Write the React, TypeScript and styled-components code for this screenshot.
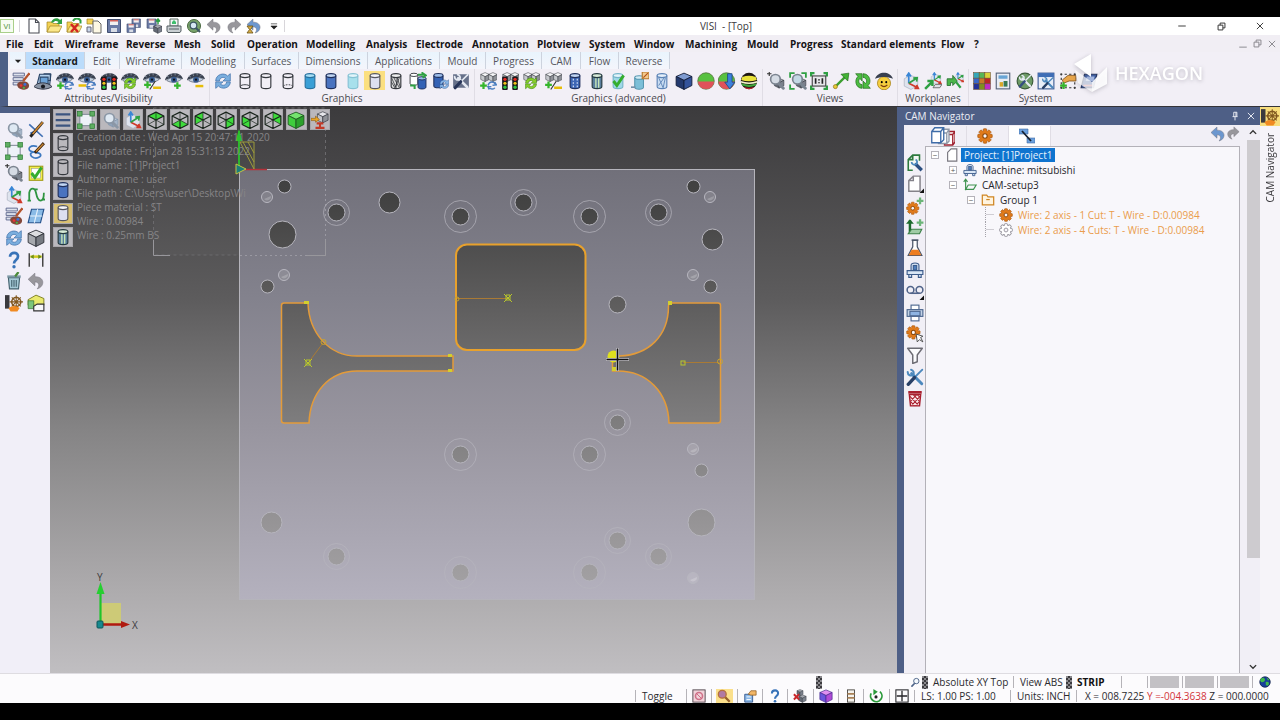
import React, { ReactNode } from "react";
import styled, { createGlobalStyle } from "styled-components";

const GlobalStyle = createGlobalStyle`
  * { box-sizing: border-box; }
  body { margin: 0; background: #000; }
  body, button { font-family: "Open Sans", "Noto Sans", sans-serif; font-size: 10px; line-height: 14px; color: #3a393d; }
  button { border: 0; padding: 0; margin: 0; background: none; display: flex; align-items: center; justify-content: center; white-space: nowrap; }
  svg { display: block; flex: none; }
`;

/* ---------- icon artwork, drawn on a 16 x 16 grid ---------- */

const G = "#2fa043";
const D = "#33363c";

const Cyl = ({ a = "none", b = a, c = D }: { a?: string; b?: string; c?: string }) => (
  <g stroke={c} strokeWidth="1">
    <path d="M3.700 3.200v9.600c0 2.600 8.600 2.600 8.600 0V3.200" fill={b} />
    <ellipse cx="8" cy="3.200" rx="4.300" ry="1.800" fill={a} />
  </g>
);
const Eye = () => (
  <g>
    <path d="M0 7.500C1 0 14 -1.500 16 6.500C12 4.500 4 4.500 0 7.500z" fill="#39404f" />
    <path d="M1.500 3.500l2 1M5 1.500l1 2M9 1l0 2M13 2.500l-1.500 1.500" stroke="#8f99a8" strokeWidth=".7" />
    <path d="M1.500 7.500C5 4 11 4 14.500 6.500C11 9.500 5 10 1.500 7.500z" fill="#c3cfdd" stroke="#4d5668" strokeWidth=".6" />
    <circle cx="8" cy="6.800" r="2.600" fill="#35588c" />
    <circle cx="8" cy="6.800" r="1" fill="#10151f" />
  </g>
);
const Plus = ({ x, y, c = "#35b52c" }: { x: number; y: number; c?: string }) => (
  <path d={`M${x - 3} ${y}h6M${x} ${y - 3}v6`} stroke={c} strokeWidth="2" fill="none" />
);
const Minus = ({ x, y }: { x: number; y: number }) => (
  <path d={`M${x - 3.5} ${y}h7`} stroke="#e6bd08" strokeWidth="2.200" />
);
const Lights = () => (
  <g>
    <rect x="1" y="4" width="5" height="12" rx="1" fill="#17181c" />
    <rect x="10" y="4" width="5" height="12" rx="1" fill="#17181c" />
    <g fill="#e32b24"><circle cx="3.500" cy="6.500" r="1.500" /><circle cx="12.500" cy="6.500" r="1.500" /></g>
    <g fill="#f0c51c"><circle cx="3.500" cy="10" r="1.400" /><circle cx="12.500" cy="10" r="1.400" /></g>
    <g fill="#2fc43b"><circle cx="3.500" cy="13.500" r="1.500" /><circle cx="12.500" cy="13.500" r="1.500" /></g>
  </g>
);
const Cycle = ({ c = "#3f7fc9", e = "#27508a" }: { c?: string; e?: string }) => (
  <g fill={c} stroke={e} strokeWidth=".6">
    <path d="M1.500 8C1.500 2 9 0 12 3.500L14.500 1.500V8H8L10.200 5.700C8.500 4 5 4.800 4.800 8z" />
    <path d="M14.500 8.800C14.500 14.500 7 16 4 12.500L1.500 14.500V8.800H8L5.800 10.700C7.500 12.500 11 12 11.200 8.800z" />
  </g>
);
const Small = ({ x = 0, y = 0, s = 0.6, children }: { x?: number; y?: number; s?: number; children: ReactNode }) => (
  <g transform={`translate(${x} ${y}) scale(${s})`}>{children}</g>
);
const Hook = () => <path d="M8 12c1-4 5.500-4 6.500-1m-.5 3c-1 2-4.500 1-4.500 0m4.500-5l1.500 2.500-3.500 .3M9 15.500l-1-2.500 3 0" stroke="#4b7dbf" strokeWidth="1.300" fill="none" />;
const Cube = ({ t = "#a4a8b0", l = "#646a75", r = "#7b818c", s = "#2c3038" }: { t?: string; l?: string; r?: string; s?: string }) => (
  <g stroke={s} strokeWidth=".8" strokeLinejoin="round">
    <path d="M8 1l7 3-7 3.500L1 4z" fill={t} />
    <path d="M1 4l7 3.500V15.500L1 12z" fill={l} />
    <path d="M15 4L8 7.500V15.500L15 12z" fill={r} />
  </g>
);
const faces: Record<string, string> = {
  top: "M8 1l7 3.500L8 8 1 4.500z",
  bottom: "M1 12l7-4 7 4-7 3.500z",
  back: "M1 4.500L8 1v7L1 12z",
  right: "M15 4.500L8 8v7.500L15 12z",
  left: "M1 4.500L8 8v7.500L1 12z",
  far: "M15 4.500L8 1v7L15 12z",
};
const FaceCube = ({ f }: { f: string }) => (
  <g strokeLinejoin="round">
    <path d={faces[f]} fill="#3edb3c" />
    <path d="M8 1l7 3.500V12l-7 3.500L1 12V4.500zM1 4.500L8 8l7-3.500M8 8v7.500" fill="none" stroke="#17221a" strokeWidth="1" />
    <path d="M8 1v7M1 12l7-4 7 4" fill="none" stroke="#17221a" strokeWidth=".6" />
  </g>
);
const Lens = ({ c = "#bcd7ee", h = "#6e7683" }: { c?: string; h?: string }) => (
  <g>
    <path d="M10 10l4.500 4.500" stroke={h} strokeWidth="2.600" strokeLinecap="round" />
    <circle cx="7.500" cy="6.500" r="4.300" fill={c} stroke={h} strokeWidth="1.500" />
  </g>
);
const Gear = ({ c = "#e07a1a", hollow = false }: { c?: string; hollow?: boolean }) => (
  <g>
    {[0, 45, 90, 135].map((a) => (
      <rect key={a} x="6.300" y=".8" width="3.400" height="14.400" rx=".6" fill={hollow ? "#fff" : c} stroke={hollow ? c : "#a85509"} strokeWidth={hollow ? "1.100" : ".7"} transform={`rotate(${a} 8 8)`} />
    ))}
    <circle cx="8" cy="8" r="5.200" fill={hollow ? "#fff" : c} />
    <circle cx="8" cy="8" r="2.200" fill="#f8f6fa" stroke={hollow ? c : "#8d4a0c"} strokeWidth="1.100" />
  </g>
);
const Frame = ({ c = "#5fae62" }: { c?: string }) => (
  <g>
    <rect x="2.500" y="3" width="11" height="10" fill="#eef2f8" stroke="#8a919e" />
    {[[0.5, 0.5], [11.5, 0.5], [0.5, 11.5], [11.5, 11.5]].map(([x, y]) => (
      <rect key={`${x}${y}`} x={x} y={y} width="4" height="4" fill={c} stroke="#24772d" strokeWidth=".6" />
    ))}
  </g>
);
const Axes = () => (
  <g fill="none" strokeWidth="1.500">
    <path d="M2 6l5-3 7 2v7l-6 3.500-6-3z" fill="#dfe4ee" stroke="#a8afbd" strokeWidth=".6" />
    <path d="M6 10V2M4 4l2-3 2 3" stroke="#3a86d6" />
    <path d="M6 10l8 4M11 14.500l3.500 0-1.500-3" stroke="#cf3a2a" />
    <path d="M6 10l7-4.500M10 5.500l3.500-.5-.5 3.500" stroke={G} />
  </g>
);
const Page = ({ f = "#fff" }: { f?: string }) => (
  <path d="M3 1h6.500L13 4.500V15H3zM9.500 1v3.500H13" fill={f} stroke="#4a4d55" strokeWidth="1.100" />
);
const Folder = () => (
  <g stroke="#a08420" strokeWidth=".7">
    <path d="M1 4h5l1 1.500h6V14H1z" fill="#f3d254" />
    <path d="M4 8h12l-3 6H1z" fill="#fbe78a" />
  </g>
);
const Floppy = () => (
  <g>
    <path d="M1.500 1.500h13v13h-13z" fill="#6b7ba6" stroke="#414e70" />
    <path d="M4 2h8v5H4z" fill="#f2f0f0" /><path d="M4 2h8v1.500H4z" fill="#d2605a" />
    <path d="M5 10h6v4H5z" fill="#d8dce5" />
  </g>
);
const Undo = ({ c = "#98979c" }: { c?: string }) => (
  <path d="M7 1v3.200C12 4 14.500 7 14 10c-.4 2.500-2.300 4.300-5 5 2-2 2.500-6-2-6.200v3.400L1 6.500z" fill={c} stroke="#77767e" strokeWidth=".5" />
);
const Check = () => <path d="M4 8l3 4 6-9" stroke="#35ad2e" strokeWidth="2.600" fill="none" />;
const Brush = () => (
  <g>
    <path d="M1 1h10v2.500H1zM1 5h9v2.500H1zM1 9h7v2.500H1z" fill="#dfe3ee" stroke="#59638a" strokeWidth=".8" />
    <path d="M15.500 1L10 8" stroke="#b4532c" strokeWidth="2" />
    <path d="M5 10c2-2.500 9-2.500 10 1s-2 5.500-6 4.500-5-3.500-4-5.500z" fill="#84483a" />
    <circle cx="8" cy="12" r="1.200" fill="#e33" /><circle cx="11.500" cy="11" r="1.300" fill="#3b70d8" /><circle cx="10.500" cy="14" r="1" fill="#48b548" />
  </g>
);
const Tools = ({ a = "#4c88bd", b = "#283f66" }: { a?: string; b?: string }) => (
  <g fill="none" strokeLinecap="round">
    <path d="M5 5l9 9" stroke={a} strokeWidth="2.600" /><path d="M1.500 3.500c0 3 3 4 5 2.500 1-2 0-4-2-4.500" stroke={a} strokeWidth="1.800" />
    <path d="M14.500 1.500L8 8" stroke={a} strokeWidth="1.600" /><path d="M7.500 8.500L2 14.500" stroke={b} strokeWidth="3" />
  </g>
);
const Machine = () => (
  <g fill="#d9e6f5" stroke="#3d5c8c" strokeWidth="1">
    <path d="M4.500 8V4c0-3 7-3 7 0v4" /><path d="M1 8.500h14V12H1z" /><path d="M2.500 12h2.500v2.500H2.500zM11 12h2.500v2.500H11z" />
    <rect x="6.500" y="4" width="3" height="4" fill="#4d7fbe" />
  </g>
);
const Cubes3 = () => (
  <g>
    <Small x={1} y={0} s={0.55}><Cube t="#f6f6f8" l="#c5c8cc" r="#8e9197" /></Small>
    <Small x={8} y={0} s={0.55}><Cube t="#f6f6f8" l="#c5c8cc" r="#8e9197" /></Small>
  </g>
);
const Wheel = () => (
  <g>
    <rect x="0" y="1" width="4" height="12" fill="#3a3a3e" />
    <g stroke="#80571f" fill="none"><circle cx="10" cy="7" r="4" strokeWidth="1.400" /><path d="M10 1v12M4 7h12M6 3l8 8M14 3l-8 8" strokeWidth=".9" /></g>
    <path d="M3 12.500c4-2.500 7-2.500 10 0l-2 3H5z" fill="#f08a22" />
  </g>
);

const art: Record<string, ReactNode> = {
  brush: <Brush />,
  layers: <g><path d="M3 10l2-8h10l-1 9z" fill="#b6d2ee" stroke="#2c4668" /><path d="M5.500 4.500h7v6h-7z" fill="#6da3d8" stroke="#2c4668" /><path d="M8.500 1.500h6v6h-2" fill="none" stroke="#2c4668" /><path d="M0 13c3-4.500 12-4.500 16 0-4 3-12 3-16 0z" fill="#8b95a5" stroke="#2b3040" strokeWidth=".8" /><circle cx="8" cy="12.800" r="1.800" fill="#16181f" /></g>,
  eyeSwap: <g><Eye /><Plus x={4} y={12} /><Hook /></g>,
  eyeBack: <g><Eye /><Minus x={4} y={12} /><Hook /></g>,
  eyeLights: <g><Eye /><Lights /></g>,
  eyeCycle: <g><Eye /><Small x={2} y={4} s={0.75}><Cycle c="#86cf2c" e="#3e7d12" /></Small></g>,
  eyeToggle: <g><Eye /><Plus x={4} y={11.500} /><path d="M6 15.500L11 8" stroke="#333" /><Minus x={12.500} y={14} /></g>,
  eyePlus: <g><Eye /><Plus x={11} y={12} /></g>,
  eyeMinus: <g><Eye /><Minus x={11} y={12.500} /></g>,
  refresh: <Cycle c="#7aaede" e="#3a6aa6" />,
  cylWire: <g><Cyl /><path d="M4 12.800c0-2 8-2 8 0" stroke={D} fill="none" strokeWidth=".8" /></g>,
  cylPlain: <Cyl />,
  cylDash: <g><Cyl /><path d="M4 12.800c0-2 8-2 8 0" stroke={D} fill="none" strokeWidth=".8" strokeDasharray="1.500 1" /></g>,
  cylSky: <Cyl a="#a9dff5" b="#3a9fd6" c="#28719f" />,
  cylBlue: <Cyl a="#c2d6f3" b="#4a73c0" c="#1f2f5c" />,
  cylPale: <Cyl a="#e2f4fa" b="#a8e0ec" c="#86c2d4" />,
  cylWhite: <Cyl a="#f5f5fa" b="#dddff0" c="#55555e" />,
  cylMesh: <g><Cyl a="#eee" b="#ddd" /><path d="M4 5l4 9 1-9 3 9M6 5l5 9M4 9l3 5M7 14l4-9" stroke={D} strokeWidth=".7" fill="none" /></g>,
  cylCopy: <g><Small x={-2} y={0} s={0.8}><Cyl a="#fff" /></Small><Small x={5} y={3} s={0.82}><Cyl a="#9dbdea" b="#3462b5" c="#1f2f5c" /></Small><path d="M8 2.500h4V1l3 2-3 2M1 12h4l0 3" stroke={G} strokeWidth="1.800" fill="none" /></g>,
  cylRefresh: <g><Small x={-1}  s={0.95}><Cyl a="#9dbdea" b="#3462b5" c="#1f2f5c" /></Small><Small x={7} y={6}><Cycle c="#8bb9ea" /></Small></g>,
  cylTools: <g><rect x="1" y="2" width="14" height="12" fill="#67718a" /><Small x={1} y={1} s={0.9}><Tools a="#e5e9f2" b="#273458" /></Small></g>,
  cubeSwap: <g><Cubes3 /><Plus x={4} y={12} /><Hook /></g>,
  cubeLights: <g><Cubes3 /><Lights /></g>,
  cubeCycle: <g><Cubes3 /><Small x={2} y={4} s={0.75}><Cycle c="#86cf2c" e="#3e7d12" /></Small></g>,
  cubeToggle: <g><Cubes3 /><Plus x={4} y={11.500} /><path d="M6 15.500L11 8" stroke="#333" /><Minus x={12.500} y={14} /></g>,
  cylDots: <g><Cyl a="#c2d6f3" b="#3d66b5" c="#1f2f5c" /><path d="M6.500 6v8M10 6v8" stroke="#dfe9fa" strokeDasharray="1.500 1.500" /></g>,
  cylStripe: <g><Cyl a="#d8ebd8" b="#5a7f9d" c="#24393f" /><path d="M7 5.500v8.500M9.500 5.500v8.500" stroke="#c8e8b8" strokeWidth="1.200" /></g>,
  cylCheck: <g><Cyl a="#e2f4fa" b="#9fd8e8" c="#74b4c8" /><Check /></g>,
  cylNote: <g><Small y={2} s={0.9}><Cyl a="#d3ecf5" b="#7cbfd8" c="#5293ad" /></Small><path d="M0 13.500h4" stroke="#7390a8" strokeWidth="1.500" /><path d="M10 0h6v6h-6z" fill="#f2c98c" stroke="#b5762a" /><path d="M11 5l4-4" stroke="#b34b12" /></g>,
  cylNet: <g><Cyl a="#e4eefa" b="#c9dcf2" c="#5b82b5" /><path d="M5 5l4 9 2-9M5 12l5-7" stroke="#5b82b5" strokeWidth=".8" fill="none" /></g>,
  cubeNavy: <Cube t="#7f9bd0" l="#23396e" r="#34539b" s="#131d3a" />,
  ballSplit: <g><circle cx="8" cy="8" r="7.300" fill="#58c140" stroke="#54703c" strokeWidth=".7" /><path d="M.8 8.500a7.200 6.700 0 0 0 14.400 0z" fill="#e0525a" /></g>,
  ballDown: <g><circle cx="7.500" cy="8" r="7.300" fill="#58c140" stroke="#54703c" strokeWidth=".7" /><path d="M.4 8.500a7.100 6.700 0 0 0 14.200 0z" fill="#e0525a" /><path d="M8.500 1.500h4V9H15l-4.500 6L6 9h2.500z" fill="#3d82dc" stroke="#1c457e" strokeWidth=".7" /></g>,
  ballBands: <g><circle cx="8" cy="8" r="7.300" fill="#1e1712" /><path d="M2 4.500q6-2.500 12 0l.9 2.500q-7 2.500-13.800 0z" fill="#e9e23a" /><path d="M.9 8q7 2.500 14.200 0v1.500q-7 2.500-14.100 0z" fill="#f4f2cc" /><path d="M1.200 10q7 2.500 13.600 0l-.8 2q-6 2.500-12 0z" fill="#3fa63c" /><path d="M3 13q5 2 10 0-5 4.500-10 0z" fill="#b8262b" /></g>,
  lensCube: <g><Small x={6} y={5}><Cube /></Small><Lens c="#d5dbe4" h="#7c8490" /><path d="M0 1.500h4M2 0v3.500" stroke="#333" /></g>,
  lensGreen: <g><Small x={6} y={5}><Cube /></Small><Lens c="#c3d8e4" h="#78848f" /><path d="M1 5V1h4M11 1h4v4M1 11v4h4" stroke={G} strokeWidth="1.600" fill="none" /></g>,
  ratio: <g><path d="M1 4V1h3M12 1h3v3M1 12v3h3M12 15h3v-3" stroke={G} strokeWidth="2" fill="none" /><rect x="2" y="3.500" width="12" height="9" fill="#e6e6ea" stroke="#444" /><path d="M5 5.500v5M11 5.500v5M8 6.500v1M8 9v1" stroke="#222" strokeWidth="1.500" /></g>,
  slopeArrow: <g><path d="M3 13L13 3" stroke="#3c9f30" strokeWidth="2" /><path d="M8 2l7-1-1 7z" fill="#43b335" stroke="#236b1a" strokeWidth=".6" /><circle cx="3" cy="13" r="1.800" fill="#e6cb3a" stroke="#8a6f10" strokeWidth=".6" /></g>,
  turnGreen: <g transform="rotate(90 8 8)"><Cycle c="#4cbc42" e="#1f6a19" /></g>,
  hatFace: <g><circle cx="8" cy="10" r="5.800" fill="#f6cf3f" stroke="#a67f12" strokeWidth=".7" /><path d="M0 6C3 -1 13 -1 16 6C11 4 5 4 0 6z" fill="#39404f" /><circle cx="6" cy="9" r=".9" /><circle cx="10" cy="9" r=".9" /><path d="M5 11.500q3 3 6 0" stroke="#7b3d10" fill="none" /></g>,
  axes: <Axes />,
  axesArrow: <g><Small x={5} y={0} s={0.7}><Axes /></Small><path d="M1 15l6-6M3 8h4.500v4.500" stroke={G} strokeWidth="2.200" fill="none" /><path d="M8 14l2-3h6l-2 3z" fill="#dedee6" stroke="#555" strokeWidth=".7" /></g>,
  axesTurn: <g><Small x={7} y={0} s={0.6}><Axes /></Small><path d="M1 12V6h5V3l4 5-4 4V9.500H4V12z" fill="#4bb54a" stroke="#1f6a2a" strokeWidth=".7" /><path d="M9 9l4 5" stroke={G} strokeWidth="2" /></g>,
  palette: <g>{["#35a7b8", "#57b557", "#d9d13a", "#3a66c8", "#c77a26", "#bb2424", "#22309a", "#7f8f20", "#c02ac6"].map((c, i) => <rect key={c} x={(i % 3) * 5 + 0.5} y={Math.floor(i / 3) * 5 + 0.5} width="5" height="5" fill={c} stroke="#6d5233" strokeWidth=".5" />)}</g>,
  sheet: <g><rect x="2" y="1" width="12" height="14" fill="#e8ecf4" stroke="#56627a" /><path d="M4 3h8v3H4z" fill="#69a5d5" /><path d="M5 9h3v4H5z" fill="#d9a82a" /><path d="M8.500 8H12v5H8.500z" fill="#3a7a53" /></g>,
  toolDisc: <g><circle cx="8" cy="8" r="7" fill="#6d9a66" stroke="#3b5a3a" /><Small x={2} y={2} s={0.75}><Tools a="#e6ecf5" b="#35507f" /></Small></g>,
  toolWindow: <g><rect x="1" y="1" width="14" height="14" fill="#e9eef8" stroke="#3c5c94" /><path d="M1 1h14v3.500H1z" fill="#3f6db5" /><Small x={4} y={4} s={0.7}><Tools /></Small></g>,
  handGrid: <g><path d="M1 2h14M1 14h14M2 1v14M14 1v14" stroke="#333" strokeDasharray="2 2" /><path d="M3 7l5-4h7v5H9l-5 2z" fill="#e8a64b" stroke="#7a4c14" strokeWidth=".7" /><Plus x={4} y={12} /></g>,
  sheetBlue: <g><path d="M4 2h11l-3 12H1z" fill="#3e5fa5" stroke="#26365f" /><path d="M6 4h7l-1 4H5z" fill="#a7bce6" /><path d="M3 12h8" stroke="#e88" strokeWidth="1.500" /></g>,
  page: <Page />,
  openGreen: <g><Folder /><path d="M5 4.500c2-5 7-5 9-2.500l2-1.500v5.500h-5.500l2-2c-2-1.500-4-1.500-5 .5z" fill={G} /></g>,
  openRed: <g><Folder /><path d="M7 3c2-3.500 6-3 7.500-.5v3" stroke={G} strokeWidth="2" fill="none" /><path d="M5 6l7 8M12 6l-7 8" stroke="#d3261f" strokeWidth="2.400" /></g>,
  copyDocs: <g><path d="M1 1h6v5H1z" fill="#f3d254" stroke="#a08420" strokeWidth=".7" /><path d="M7 3h5l3 3v9H7z" fill="#fdf8e4" stroke="#666" /><path d="M1 9h4v5H1z" fill="#c9d6ea" stroke="#667" /></g>,
  floppy: <Floppy />,
  floppies: <g><Small x={5} y={0} s={0.65}><Floppy /></Small><Small x={0} y={5} s={0.65}><Floppy /></Small></g>,
  floppyOut: <g><Small s={0.7}><Floppy /></Small><Small x={7} y={6}><Cube /></Small><path d="M12 6V1.500M10 3.500l2-2.500L14 3.500" stroke={G} strokeWidth="1.500" fill="none" /></g>,
  printer: <g><path d="M4 1h8v7H4z" fill="#f3f6f4" stroke="#5b6a62" /><path d="M6 6h4V4L8 2 6 4z" fill="#3fbf6d" /><path d="M1 8h14v5l-1 1.500H2L1 13z" fill="#c9cfd2" stroke="#545e62" /><path d="M3 11h10" stroke="#545e62" /></g>,
  preview: <g><circle cx="8" cy="8" r="6.500" fill="#79a46a" stroke="#47663f" /><circle cx="7.500" cy="7.500" r="3.300" fill="#d7e8f4" stroke="#3d5664" strokeWidth="1.200" /><path d="M10 10l4 4" stroke="#3d5664" strokeWidth="2" /></g>,
  undo: <Undo />,
  redo: <g transform="translate(16 0) scale(-1 1)"><Undo /></g>,
  history: <g><Undo c="#6c97cf" /><path d="M1 8h6l-2.500 3.500L7 15H1l2.500-3.500z" fill="#d6ad47" stroke="#6b5012" strokeWidth=".8" /></g>,
  lensSoft: <g><Small x={6} y={5}><Cube t="#b9c6d6" l="#8fa3ba" r="#a5b5c8" s="#7c8fa6" /></Small><Lens c="#dfe9f3" h="#8b97a6" /></g>,
  wand: <g><path d="M2 3l12 11M3 11l5-2" stroke="#3f6fb4" strokeWidth="1.500" /><path d="M14 1L3 14" stroke="#222" strokeWidth="2.600" /><path d="M14 1L5 11.500" stroke="#c98532" strokeWidth="1.500" /></g>,
  frame: <Frame />,
  curvePen: <g><path d="M9 4C3 2 0 6 3 8s8 1 9 3-3 4-6 3-4-4-1-5" stroke="#3c78c0" strokeWidth="1.500" fill="none" /><path d="M15 1L7 9.500" stroke="#3b240c" strokeWidth="2.600" /><path d="M14.500 1.500L8 8.500" stroke="#c98532" strokeWidth="1.200" /></g>,
  noteCheck: <g><rect x="2" y="2" width="12" height="12.500" fill="#f4ef4b" stroke="#a39c1a" /><rect x="4" y="4" width="8" height="8.500" fill="#fff" stroke="#999" strokeWidth=".5" /><Check /></g>,
  curve: <path d="M2 13V6c1-5 5-5 6 0s2 7 4 7 3-3 3-7M.5 13h3M6.500 3h3M13.500 12h2.500" stroke="#2f9440" strokeWidth="1.600" fill="none" />,
  pane: <g><path d="M4 2h11l-3 12H1z" fill="#8abbe6" stroke="#25528c" /><path d="M9.500 2L6.500 14M2.500 8h11" stroke="#e4f1fc" /></g>,
  cubeGrey: <Cube t="#dcdde0" l="#a5a8ad" r="#777b82" />,
  question: <g><path d="M4.500 5c0-4.500 7.500-4.500 7 0 0 3-3.500 3-3.500 6" stroke="#3873b8" strokeWidth="2.400" fill="none" /><circle cx="8" cy="14" r="1.500" fill="#3873b8" /></g>,
  dimension: <g><path d="M2 2v12M14 2v12" stroke="#444" strokeWidth="1.300" /><path d="M3 5h10" stroke="#d1c91c" strokeWidth="2.200" /><path d="M3 5l3-2v4zM13 5l-3-2v4z" fill="#6a8f1a" /></g>,
  trash: <g><path d="M3 5h10l-1 10H4z" fill="#a5c9d6" stroke="#44626e" /><path d="M2 3h12v2H2z" fill="#7e99a6" /><path d="M6 7v6M8 7v6M10 7v6" stroke="#44626e" /><path d="M9 4l3-4" stroke="#4a8a3a" strokeWidth="2" /></g>,
  wheel: <Wheel />,
  noteFlag: <g><path d="M1 5l7-4 7 3v6H1z" fill="#e9e96e" stroke="#77791a" strokeWidth=".8" /><path d="M1 6h5v7H1z" fill="#7cc47c" stroke="#2c6b2c" strokeWidth=".6" /><path d="M6 11l3-2h6v6H6z" fill="#f7f7fa" stroke="#333" /></g>,
  menu: <path d="M1.500 3h13M1.500 8h13M1.500 13h13" stroke="#3c5580" strokeWidth="2" />,
  faceTop: <FaceCube f="top" />, faceBottom: <FaceCube f="bottom" />, faceBack: <FaceCube f="back" />,
  faceRight: <FaceCube f="right" />, faceLeft: <FaceCube f="left" />, faceFar: <FaceCube f="far" />,
  solidGreen: <Cube t="#74e46e" l="#3fce3d" r="#2ba12c" s="#1f5a20" />,
  viewCube: <g><Small x={5} y={0} s={0.68}><Cube t="#e6e6ea" l="#c2c3c8" r="#8e9096" /></Small><path d="M0 6.500h4V4.500L7.500 7.500 4 10V8.500H0z" fill="#e8a326" stroke="#8a5a10" strokeWidth=".5" /><path d="M4 15h8M8 15v-4M5 11h6" stroke="#c23a28" strokeWidth="1.800" /></g>,
  docTool: <g><path d="M6 14.500H2V5l4-4h6v5M2 5h4V1" fill="#f4f8f4" stroke="#2d7a3e" strokeWidth="1.400" /><path d="M8 8.500l6 6" stroke="#2b4f80" strokeWidth="3" /><path d="M5 7c0 2.500 2.500 3 4 2s1-3.500-.5-4" fill="none" stroke="#4c88bd" strokeWidth="1.600" /></g>,
  pageTurn: <g><path d="M2.500 5l4-4h6v13.500h-10zM2.500 5h4V1" fill="#fff" stroke="#84828a" strokeWidth="1.300" /><path d="M16 12v4h-4z" fill="#111" /></g>,
  gearPlus: <g><Small y={4} s={0.75}><Gear /></Small><Plus x={12.500} y={3.500} c="#6cb578" /></g>,
  axisPlus: <g><path d="M3.500 13V2" stroke="#1c6a2c" strokeWidth="2.200" /><path d="M0 5l3.500-4L7 5z" fill="#1c6a2c" /><path d="M2 14h10l2-4H5z" fill="#9fcba5" stroke="#3c8048" /><Plus x={12.500} y={4} c="#6cb578" /></g>,
  flask: <g><path d="M6 1v6L2 14.500h12L10 7V1" fill="#fff" stroke="#4a5568" strokeWidth="1.100" /><path d="M5 9.500h6l2.500 5h-11z" fill="#ee7d20" /><path d="M5 1h6" stroke="#4a5568" strokeWidth="1.500" /></g>,
  machine: <Machine />,
  rolls: <g><g fill="none" stroke="#51648a" strokeWidth="1.400"><circle cx="4" cy="7" r="3" /><circle cx="12" cy="7" r="3" /><path d="M4 10h8" /></g><path d="M16 12v4h-4z" fill="#111" /></g>,
  print: <g stroke="#4d678f"><rect x="4.500" y="1" width="7" height="4" fill="#fff" /><rect x="1" y="5" width="14" height="6" fill="#c3d2e6" /><rect x="3.500" y="6.500" width="9" height="4" fill="#8fb4e2" /><rect x="4.500" y="11" width="7" height="4" fill="#fff" /></g>,
  gearPick: <g><Small s={0.82}><Gear /></Small><path d="M9 8l1 7 2-2 3 2-2-4 2-1z" fill="#fff" stroke="#444" strokeWidth=".8" /></g>,
  filter: <path d="M1.500 2h13L10 8v6l-4 1.500V8z" fill="#fbfbfd" stroke="#6d6c74" strokeWidth="1.300" strokeLinejoin="round" />,
  tools: <Tools />,
  bin: <g stroke="#a9202f" fill="none"><path d="M3 5h10l-1 10H4z" fill="#fbe9eb" strokeWidth="1.300" /><path d="M2 3h12" strokeWidth="2.400" /><path d="M6.500 5l5.500 6M10 5l2 2M3.500 6.500L11 14.500M4 11l3.500 4M9.500 5L4 11M12.500 6.500L5 14.500M12 11l-3.500 4" strokeWidth=".9" /></g>,
  gear: <Gear />,
  gearOff: <Gear c="#9a98a0" hollow />,
  setup: <g fill="none" stroke="#3f9350" strokeWidth="1.300"><path d="M3 14V2M.8 4.500L3 1.500l2.200 3" /><path d="M3 13l3-5h9l-3 5z" /></g>,
  folder: <g fill="#fff4df" stroke="#cf8522" strokeWidth="1.400"><path d="M1.500 2.500h5l1.500 2h6.500v9h-13z" /><path d="M6 7.500h4" /></g>,
  undoBlue: <Undo c="#6c97cf" />,
  link: <g><path d="M0 1h9v5H0zM8 10h8v5H8z" fill="#6ba0dd" stroke="#3f6ca6" strokeWidth=".6" /><path d="M3 3l9 10" stroke="#16202f" strokeWidth="1.800" /></g>,
  boxes: <g fill="#fff" strokeWidth=".9"><path d="M9 7l1.500-2H16v7l-1.500 2H9zM9 7h5.500v7M14.500 7L16 5" stroke="#a0212f" /><path d="M5 6l2-2.500h5v8L10.500 13H5zM5 6h5.500v7M10.500 6L12 3.500" stroke="#8f99a8" /><path d="M.5 5l2-2.500h6v8L6.500 12.500h-6zM.5 5h6v7.500M6.500 5l2-2.500" stroke="#3e6ca8" /></g>,
  globe: <g><circle cx="8" cy="8" r="7" fill="#173f9a" stroke="#0d1e48" /><path d="M3 3c3-2 5 0 5 2S5 9 3 8 1 5 3 3zM9 8c3-1 5 0 4 3s-4 2-4 0zM10 2l4 3-2 1z" fill="#3fbb4a" /></g>,
  lens: <g transform="translate(16 0) scale(-1 1)"><Lens c="#f5f9fd" h="#4c6388" /></g>,
  snap: <g><rect x="1" y="1" width="14" height="14" fill="#f0d3da" stroke="#4a3e46" /><circle cx="8" cy="8" r="4" fill="none" stroke="#cf7188" strokeWidth="1.800" /><path d="M5 5l6 6" stroke="#c95d78" /></g>,
  hammer: <g><path d="M7 7l7.500 7.500" stroke="#97602a" strokeWidth="2.600" /><circle cx="6" cy="6" r="4.500" fill="#b07aa4" stroke="#b5713c" strokeWidth="1.500" /></g>,
  docHand: <g><path d="M2 6h9v9H2z" fill="#8cb9e8" stroke="#30548a" /><path d="M6 6l3-4h6v5H9z" fill="#f1b667" stroke="#8a5418" strokeWidth=".8" /><path d="M4 9h5M4 12h5" stroke="#fff" /></g>,
  cubesRed: <g><Small x={6} y={6}><Cube /></Small><Small x={4} y={0} s={0.5}><Cube /></Small><path d="M1 6l6 6M7 6l-6 6" stroke="#c9262a" strokeWidth="2.200" /></g>,
  cubePurple: <Cube t="#e08ff0" l="#6b55dd" r="#b04bd6" s="#4a2a90" />,
  ladder: <g><rect x="4" y="1" width="8" height="14" fill="#f5f3ee" stroke="#44403c" /><path d="M4 5.500h8M4 10h8" stroke="#a98258" strokeWidth="2" /></g>,
  spin: <g><path d="M12.500 3a6.500 6.500 0 1 1-10 2" fill="none" stroke="#2b9a3a" strokeWidth="2" /><path d="M5 0l5 3-5 4z" fill="#2b9a3a" /><circle cx="8" cy="9" r="1.800" fill="#222" /></g>,
  cross: <g stroke="#26262a" fill="none"><rect x="1" y="1" width="14" height="14" strokeWidth="1.200" /><path d="M8 2v12M2 8h12" strokeWidth="1.500" /></g>,
  minimize: <path d="M2 8h12" stroke="currentColor" strokeWidth="1.500" />,
  restore: <path d="M3 6h7v7H3zM6 6V3h7v7h-3" fill="none" stroke="currentColor" strokeWidth="1.400" />,
  close: <path d="M3 3l10 10M13 3L3 13" stroke="currentColor" strokeWidth="1.500" />,
  underscore: <path d="M2 13h12" stroke="currentColor" strokeWidth="1.500" />,
  down: <path d="M3 6h10l-5 5z" fill="#222" />,
  downBar: <path d="M3 8h10l-5 5zM3 4.500h10" fill="#222" stroke="#222" />,
  chevUp: <path d="M3 11l5-5 5 5" stroke="#333" strokeWidth="2.200" fill="none" />,
  chevDown: <path d="M3 5l5 5 5-5" stroke="#333" strokeWidth="2.200" fill="none" />,
  pin: <path d="M4 9h8M6 9V2h5v7M9.500 2v7M8 9v6" stroke="currentColor" strokeWidth="1.500" fill="none" />,
  project: <path d="M3 5l4-4h6.500v14H3z" fill="#fff" stroke="#77757e" strokeWidth="1.300" />,
};

const Icon = ({ name, size = 18 }: { name: string; size?: number }) => (
  <svg width={size} height={size} viewBox="0 0 16 16" aria-hidden="true">{art[name]}</svg>
);

/* ---------- window frame ---------- */

const Screen = styled.div`
  display: flex;
  flex-direction: column;
  min-height: 100vh;
  padding: 17px 0;
  background: #000;
`;
const TitleBar = styled.header`
  display: flex;
  align-items: center;
  height: 18px;
  background: #fff;
`;
const QuickBar = styled.div`
  display: flex;
  align-items: center;
  width: 290px;
  height: 100%;
`;
const QuickButton = styled.button`
  width: 20px;
  height: 18px;
`;
const Badge = styled.span`
  width: 14px;
  height: 14px;
  margin-right: 5px;
  border: 1px solid #a9cf8a;
  background: #f7fcf2;
  color: #55913a;
  font-size: 8px;
  line-height: 12px;
  text-align: center;
`;
const Rule = styled.span`
  width: 1px;
  height: 12px;
  margin-right: 4px;
  background: #d8d6da;
`;
const Title = styled.h1`
  flex: 1;
  margin: 0;
  font-size: 10px;
  font-weight: 400;
  text-align: center;
  white-space: pre;
`;
const WindowButtons = styled.div`
  display: flex;
  justify-content: space-between;
  width: 118px;
  padding: 0 15px;

  button { color: #333; }
`;
const MenuBar = styled.nav`
  display: flex;
  align-items: center;
  height: 17px;
  padding-left: 6px;
  background: #f1eef4;
`;
const MenuItem = styled.button<{ $w: number }>`
  flex: none;
  justify-content: flex-start;
  width: ${(p) => p.$w}px;
  height: 17px;
  color: #141316;
  font-weight: 700;
`;
const ChildButtons = styled.div`
  display: flex;
  gap: 4px;
  margin-left: auto;
  padding-right: 3px;

  button { color: #88868c; }
`;

/* ---------- ribbon ---------- */

const Ribbon = styled.section`
  position: relative;
  height: 55px;
  border-left: 8px solid #4e5f86;
  border-bottom: 1px solid #353438;
  background: #f2eff6;
`;
const TabRow = styled.div`
  display: flex;
  height: 17px;
  padding-left: 2px;
`;
const Tab = styled.button<{ $w: number; $active?: boolean }>`
  flex: none;
  width: ${(p) => p.$w}px;
  border-right: 1px solid #cdd3de;
  background: ${(p) => (p.$active ? "#bbdcfb" : "linear-gradient(#e9f4fd, #f4f5fb)")};
  color: ${(p) => (p.$active ? "#16181c" : "#56565c")};
  font-weight: ${(p) => (p.$active ? 700 : 400)};
`;
const Groups = styled.div`
  display: flex;
  height: 37px;
`;
const Group = styled.div<{ $w: number }>`
  display: flex;
  flex: none;
  flex-direction: column;
  width: ${(p) => p.$w}px;
  padding: 2px 2px 0;
  border-right: 1px solid #e0dde5;

  &:last-child { border-right-color: transparent; }
`;
const GroupIcons = styled.div`
  display: flex;
  height: 21px;
`;
const GroupLabel = styled.span`
  color: #4b4a50;
  line-height: 16px;
  text-align: center;
`;
const RibbonButton = styled.button<{ $on?: boolean }>`
  flex: 1;
  background: ${(p) => (p.$on ? "#fbdf7f" : "none")};
`;
const Brand = styled.div`
  position: absolute;
  top: 1px;
  right: 77px;
  display: flex;
  align-items: center;
  gap: 7px;
  color: #fff;
  font-size: 18px;
  font-weight: 600;
  line-height: 40px;
  filter: drop-shadow(0 1px 2px rgba(90, 85, 100, 0.35));
`;

/* ---------- work area ---------- */

const Work = styled.main`
  display: flex;
  flex: 1;
  min-height: 566px;
`;
const Palette = styled.aside`
  flex: none;
  width: 50px;
  padding: 6px 3px 0;
  border-top: 6px solid #4e5f86;
  background: #f1eff8;
`;
const PaletteGrid = styled.div`
  display: grid;
  grid-template-columns: 1fr 1fr;
  grid-template-rows: repeat(9, 1fr);
  height: 195px;
`;
const Viewport = styled.section`
  position: relative;
  flex: 1;
  padding: 2px 3px;
  background: linear-gradient(#3c3b3d 0%, #5d5c5d 34%, #858485 57%, #aeacae 86%, #c0bec1 100%);
`;
const Drawing = styled.svg`
  position: absolute;
  inset: 0;
  width: 100%;
  height: 100%;
`;
const ViewTools = styled.div`
  position: relative;
  display: flex;
  gap: 3px;
  width: 277px;
  height: 21px;
`;
const ViewColumn = styled.div`
  display: flex;
  flex: none;
  flex-direction: column;
  gap: 3px;
  width: 20px;
  height: 114px;
  margin-top: 3px;
`;
const ViewButton = styled.button<{ $on?: boolean }>`
  flex: 1;
  border: 1px solid #a9a7ac;
  background: ${(p) => (p.$on ? "#d9c071" : "#bab8bd")};
`;
const Overlay = styled.div`
  position: relative;
  display: flex;
  gap: 4px;
`;
const FileFacts = styled.ul`
  margin: 0;
  padding: 0;
  list-style: none;
  color: #868587;
  white-space: nowrap;
`;

/* ---------- navigator ---------- */

const Navigator = styled.aside`
  display: flex;
  flex: none;
  flex-direction: column;
  width: 363px;
  border-left: 7px solid #4e5f86;
  background: #f1eff6;
`;
const NavHeader = styled.div`
  display: flex;
  align-items: center;
  gap: 6px;
  height: 18px;
  padding: 0 4px 0 1px;
  background: #4e5f86;
  color: #eceef4;

  button { color: #eceef4; }
`;
const NavTitle = styled.h2`
  flex: 1;
  margin: 0;
  font-size: 10px;
  font-weight: 400;
`;
const NavBody = styled.div`
  display: flex;
  flex: 1;
`;
const NavTools = styled.div`
  display: grid;
  grid-template-rows: repeat(12, 1fr);
  width: 21px;
  height: 257px;
  margin-top: 27px;
`;
const NavMain = styled.div`
  display: flex;
  flex: 1;
  flex-direction: column;
`;
const NavTabs = styled.div`
  display: flex;
  height: 21px;
  padding-top: 1px;
`;
const NavTab = styled.button<{ $active?: boolean }>`
  width: 42px;
  padding-right: 5px;
  border-right: 1px solid #e0dde5;
  background: ${(p) => (p.$active ? "#fff" : "none")};
`;
const NavHistory = styled.div`
  display: flex;
  align-items: flex-start;
  margin-left: auto;
`;
const Tree = styled.ul`
  flex: 1;
  margin: 0;
  padding: 0;
  border: 1px solid #b3b1b8;
  border-bottom: 0;
  background: #f8f7fb;
  list-style: none;
`;
const TreeRow = styled.li<{ $level: number }>`
  display: flex;
  align-items: center;
  height: 15px;
  padding-left: ${(p) => p.$level * 18 + 5}px;
  color: #26252a;
`;
const Expander = styled.button`
  width: 8px;
  height: 8px;
  margin-right: 6px;
  border: 1px solid #b4b2b9;
  background: #fff;
  color: #555;
  font-size: 8px;
  line-height: 6px;
`;
const Branch = styled.span`
  width: 9px;
  height: 15px;
  margin-right: 5px;
  border-left: 1px dotted #a5a3aa;
  background: linear-gradient(#cfcdd3, #cfcdd3) 0 7px / 8px 1px no-repeat;
`;
const TreeLabel = styled.span<{ $kind?: "selected" | "operation" }>`
  padding: 0 3px;
  margin-left: 2px;
  background: ${(p) => (p.$kind === "selected" ? "#0f74cf" : "none")};
  color: ${(p) => (p.$kind === "selected" ? "#e6f1fc" : p.$kind === "operation" ? "#ea9c4c" : "#26252a")};
  white-space: nowrap;
`;
const Scrollbar = styled.div`
  display: flex;
  flex-direction: column;
  align-items: center;
  justify-content: space-between;
  width: 14px;
  margin-left: 6px;
  padding: 2px 0 1px;
`;
const Thumb = styled.span`
  width: 13px;
  height: 418px;
  margin: 3px 0 auto;
  background: #cdcbcf;
`;
const SideStrip = styled.aside`
  flex: none;
  width: 20px;
  background: #f6f4f9;
`;
const SideTab = styled.button`
  flex-direction: column;
  gap: 7px;
  width: 20px;
`;
const SideIcon = styled.span`
  width: 20px;
  height: 19px;
  padding: 1px;
  background: #f8dd7c;
`;
const SideText = styled.span`
  writing-mode: vertical-rl;
  transform: rotate(180deg);
`;

/* ---------- status bar ---------- */

const Status = styled.footer`
  display: flex;
  flex-direction: column;
  align-items: flex-end;
  height: 30px;
  padding-top: 1px;
  border-top: 1px solid #dedce1;
  background: #fcfbfd;
  color: #2b2a2e;
`;
const StatusRow = styled.div`
  display: flex;
  align-items: center;
  height: 14px;
`;
const Cell = styled.div<{ $w: number; $pad?: number }>`
  display: flex;
  align-items: center;
  flex: none;
  width: ${(p) => p.$w}px;
  height: 12px;
  padding-left: ${(p) => p.$pad ?? 6}px;
  border-left: 1px solid #b5b3b8;
  white-space: pre;
`;
const Plain = styled(Cell)`
  border-left-color: transparent;
`;
const Strong = styled.strong`
  color: #111;
`;
const Grip = styled.span`
  flex: none;
  width: 6px;
  height: 13px;
  background: repeating-conic-gradient(#3b3a3e 0 25%, #8b8a8e 0 50%) 0 0 / 4px 4px;
`;
const Gauge = styled.span`
  width: 29px;
  height: 12px;
  background: #c3c1c5;
`;
const StatusIcons = styled.div`
  display: flex;
  width: 228px;
`;
const StatusButton = styled.button<{ $on?: boolean }>`
  flex: 1;
  height: 14px;
  padding: 0 4px;
  border-left: 1px solid #b5b3b8;
  background: ${(p) => (p.$on ? "#fbe08c content-box" : "none")};
`;
const Negative = styled.span`
  color: #d2343a;
`;

/* ---------- content ---------- */

const quick = ["page", "openGreen", "openRed", "copyDocs", "floppy", "floppies", "floppyOut", "printer", "preview", "undo", "redo", "history"];
const menus: [string, number][] = [
  ["File", 28], ["Edit", 31], ["Wireframe", 61], ["Reverse", 48], ["Mesh", 37], ["Solid", 36], ["Operation", 59], ["Modelling", 60],
  ["Analysis", 50], ["Electrode", 56], ["Annotation", 65], ["Plotview", 52], ["System", 45], ["Window", 51], ["Machining", 62],
  ["Mould", 43], ["Progress", 51], ["Standard elements", 100], ["Flow", 33], ["?", 12],
];
const tabs: [string, number][] = [
  ["Standard", 59], ["Edit", 35], ["Wireframe", 62], ["Modelling", 63], ["Surfaces", 54], ["Dimensions", 69], ["Applications", 72],
  ["Mould", 46], ["Progress", 56], ["CAM", 39], ["Flow", 38], ["Reverse", 51],
];
const groups: { label: string; w: number; icons: string[] }[] = [
  { label: "Attributes/Visibility", w: 202, icons: ["brush", "layers", "eyeSwap", "eyeBack", "eyeLights", "eyeCycle", "eyeToggle", "eyePlus", "eyeMinus"] },
  { label: "Graphics", w: 265, icons: ["refresh", "cylWire", "cylPlain", "cylDash", "cylSky", "cylBlue", "cylPale", "cylWhite", "cylMesh", "cylCopy", "cylRefresh", "cylTools"] },
  { label: "Graphics (advanced)", w: 288, icons: ["cubeSwap", "cubeLights", "cubeCycle", "cubeToggle", "cylDots", "cylStripe", "cylCheck", "cylNote", "cylNet", "cubeNavy", "ballSplit", "ballDown", "ballBands"] },
  { label: "Views", w: 135, icons: ["lensCube", "lensGreen", "ratio", "slopeArrow", "turnGreen", "hatFace"] },
  { label: "Workplanes", w: 71, icons: ["axes", "axesArrow", "axesTurn"] },
  { label: "System", w: 134, icons: ["palette", "sheet", "toolDisc", "toolWindow", "handGrid", "sheetBlue"] },
];
const paletteIcons = ["lensSoft", "wand", "frame", "curvePen", "lensCube", "noteCheck", "axes", "curve", "brush", "pane", "refresh", "cubeGrey", "question", "dimension", "trash", "undo", "wheel", "noteFlag"];
const viewIcons = ["menu", "frame", "lensSoft", "axes", "faceTop", "faceBottom", "faceBack", "faceRight", "faceLeft", "faceFar", "solidGreen", "viewCube"];
const shadeIcons = ["cylWire", "cylPlain", "cylBlue", "cylWhite", "cylStripe"];
const facts = [
  "Creation date : Wed Apr 15 20:47:11 2020", "Last update : Fri Jan 28 15:31:13 2022", "File name : [1]Project1", "Author name : user",
  "File path : C:\\Users\\user\\Desktop\\Wi", "Piece material : ST", "Wire : 0.00984", "Wire : 0.25mm BS",
];
const navIcons = ["docTool", "pageTurn", "gearPlus", "axisPlus", "flask", "machine", "rolls", "print", "gearPick", "filter", "tools", "bin"];
const statusIcons = ["snap", "hammer", "docHand", "question", "cubesRed", "cubePurple", "ladder", "spin", "cross"];
const tree: { level: number; mark?: string; icon: string; text: string; kind?: "selected" | "operation" }[] = [
  { level: 0, mark: "−", icon: "project", text: "Project: [1]Project1", kind: "selected" },
  { level: 1, mark: "+", icon: "machine", text: "Machine: mitsubishi" },
  { level: 1, mark: "−", icon: "setup", text: "CAM-setup3" },
  { level: 2, mark: "−", icon: "folder", text: "Group 1" },
  { level: 3, icon: "gear", text: "Wire: 2 axis - 1 Cut: T - Wire - D:0.00984", kind: "operation" },
  { level: 3, icon: "gearOff", text: "Wire: 2 axis - 4 Cuts: T - Wire - D:0.00984", kind: "operation" },
];

/* hole centre, radius, and counterbore radius where there is one */
const holes: [number, number, number, number?][] = [
  [284, 186, 6], [282, 234, 13], [267, 286, 6], [336, 212, 8, 13], [389, 202, 10], [460, 216, 8, 16], [523, 202, 8, 13],
  [589, 216, 8, 16], [658, 212, 8, 13], [693, 186, 6], [712, 239, 10], [710, 286, 6], [617, 304, 8], [617, 422, 7, 13],
  [460, 454, 8, 16], [589, 454, 8, 16], [701, 470, 6], [271, 522, 10], [701, 522, 13], [336, 556, 8, 13], [617, 540, 8, 13],
  [658, 556, 8, 13], [460, 572, 8, 16], [589, 572, 8, 16],
];
const dowels: [number, number][] = [[267, 197], [284, 275], [710, 197], [693, 275], [693, 449], [693, 578]];

const Mark = ({ x, y }: { x: number; y: number }) => (
  <path d={`M${x - 4} ${y - 4}l8 8m0-8l-8 8M${x - 2} ${y - 3}h4v5h-4z`} fill="none" stroke="#b7c62c" strokeWidth="1" />
);

const Part = () => (
  <Drawing viewBox="50 107 847 566" role="img" aria-label="Plate seen from the top">
    <defs>
      <linearGradient id="plate" x1="0" y1="0" x2="0" y2="1">
        <stop offset="0" stopColor="#71707a" /><stop offset=".3" stopColor="#83828d" /><stop offset=".6" stopColor="#98959f" /><stop offset="1" stopColor="#b4b1be" />
      </linearGradient>
      <linearGradient id="through" gradientUnits="userSpaceOnUse" x1="0" y1="107" x2="0" y2="673">
        <stop offset="0" stopColor="#3a3a3a" /><stop offset=".17" stopColor="#434343" /><stop offset=".34" stopColor="#5d5c5c" /><stop offset=".57" stopColor="#807f80" /><stop offset=".75" stopColor="#989698" /><stop offset="1" stopColor="#b3b1b4" />
      </linearGradient>
    </defs>
    <rect x="153.500" y="108" width="172" height="147" fill="#fff" fillOpacity=".02" stroke="#6b6a6d" strokeDasharray="3 3" />
    <rect x="239.500" y="169.500" width="515" height="430" fill="url(#plate)" stroke="#b5b4bb" />
    <path d="M240 255.500h85.500V170" fill="none" stroke="#9a99a2" strokeDasharray="2 3" />
    <path d="M307 255.500h18.500V240M153.500 240v15.500H170" fill="none" stroke="#98979c" />
    {holes.map(([x, y, r, ring]) => (
      <g key={`${x}-${y}`} stroke="#b6b5bd" strokeWidth="1">
        {ring && <circle cx={x + 0.5} cy={y + 0.5} r={ring} fill="none" strokeOpacity=".7" />}
        <circle cx={x + 0.5} cy={y + 0.5} r={r + 0.5} fill="url(#through)" />
      </g>
    ))}
    {dowels.map(([x, y]) => (
      <g key={`${x}-${y}`}>
        <circle cx={x} cy={y} r="5.500" fill="#fff" fillOpacity=".1" stroke="#b8b7c0" />
        <path d={`M${x - 3} ${y + 2}a4 4 0 0 0 7-3z`} fill="#fff" fillOpacity=".2" />
      </g>
    ))}
    <g fill="url(#through)" stroke="#e39b3a" strokeWidth="1.500">
      <rect x="456" y="244.500" width="129.500" height="105.500" rx="11" stroke="#e8a12c" strokeWidth="2" />
      <path d="M284 303h24c1 29 20 53 49 53h96v15h-96c-28 0-47 22-48 52h-25q-2.500 0-2.500-2.500V305.500q0-2.500 2.500-2.500z" />
      <path d="M669 303h49q2.500 0 2.500 2.500v115q0 2.500-2.500 2.500h-49c-1-31-22-52-51-52h-5.500v-15h7c29-1 49-20 49-50z" />
    </g>
    <g fill="none" stroke="#a97a35">
      <path d="M457 298.500h51M308 363l15-20M683 362.500h36" />
      <g stroke="#c9a42c"><circle cx="323.500" cy="342" r="2.500" /><circle cx="457" cy="299" r="2" /><circle cx="720" cy="361.500" r="2.500" /></g>
    </g>
    <Mark x={508} y={298} /><Mark x={308} y={363} />
    <rect x="681" y="361" width="4" height="4" fill="none" stroke="#b7c62c" />
    <g fill="#d3cf2d"><rect x="304" y="301" width="5" height="3" /><rect x="448" y="354" width="4" height="3" /><rect x="448" y="369" width="4" height="3" /><rect x="668" y="301" width="4" height="4" /><rect x="612" y="367" width="5" height="4" /></g>
    <circle cx="613.500" cy="356.500" r="6" fill="#dfe01e" />
    <path d="M606 359.500h23M617.500 348v23" stroke="#c8c6cc" strokeWidth="3" />
    <path d="M606.500 359.500h22M617.500 348.500v22" stroke="#111" strokeWidth="1.500" />
    <g>
      <path d="M239 169v-38" stroke="#2cc22c" strokeWidth="1.800" /><path d="M235.500 141l3.500-12 3.500 12z" fill="#2cc22c" />
      <path d="M243 169.500h24" stroke="#b3313a" strokeWidth="1.500" />
      <path d="M240 142h14v27M240 142l14 27M243 142l11 20M248 142l6 11" fill="none" stroke="#9d9b3a" />
      <path d="M236 164v10l10-5z" fill="#1c7d7a" stroke="#c6c340" />
    </g>
    <rect x="101" y="603" width="20" height="21" fill="#cdca77" />
    <path d="M100.500 624v-32" stroke="#1fc42a" strokeWidth="2.200" /><path d="M96.500 594l4-12 4 12z" fill="#25cf30" />
    <path d="M100 624.500h22" stroke="#b01a10" strokeWidth="2.500" /><path d="M121 621l9 3.500-9 3.500z" fill="#b01a10" />
    <rect x="97" y="621" width="6" height="7" rx="1" fill="#17898f" stroke="#0d565b" />
    <text x="97" y="581" fontSize="10" fill="#3c3b3e">Y</text>
    <text x="132" y="629" fontSize="10" fill="#3c3b3e">X</text>
  </Drawing>
);

export default function App() {
  return (
    <Screen>
      <GlobalStyle />
      <TitleBar>
        <QuickBar>
          <Badge>VI</Badge>
          <Rule />
          {quick.map((n) => <QuickButton key={n} aria-label={n}><Icon name={n} size={16} /></QuickButton>)}
          <QuickButton aria-label="Customise"><Icon name="downBar" size={10} /></QuickButton>
          <Rule />
        </QuickBar>
        <Title>{"VISI  - [Top]"}</Title>
        <WindowButtons>
          <button aria-label="Minimize"><Icon name="minimize" size={10} /></button>
          <button aria-label="Restore"><Icon name="restore" size={11} /></button>
          <button aria-label="Close"><Icon name="close" size={10} /></button>
        </WindowButtons>
      </TitleBar>

      <MenuBar>
        {menus.map(([t, w]) => <MenuItem key={t} $w={w}>{t}</MenuItem>)}
        <ChildButtons>
          <button aria-label="Minimize view"><Icon name="underscore" size={10} /></button>
          <button aria-label="Restore view"><Icon name="restore" size={11} /></button>
          <button aria-label="Close view"><Icon name="close" size={10} /></button>
        </ChildButtons>
      </MenuBar>

      <Ribbon>
        <TabRow>
          <Tab $w={16} aria-label="Ribbon options"><Icon name="down" size={10} /></Tab>
          {tabs.map(([t, w], i) => <Tab key={t} $w={w} $active={i === 0}>{t}</Tab>)}
        </TabRow>
        <Groups>
          {groups.map((g) => (
            <Group key={g.label} $w={g.w}>
              <GroupIcons>
                {g.icons.map((n) => <RibbonButton key={n} $on={n === "cylWhite"} aria-label={n}><Icon name={n} /></RibbonButton>)}
              </GroupIcons>
              <GroupLabel>{g.label}</GroupLabel>
            </Group>
          ))}
        </Groups>
        <Brand>
          <svg width="34" height="40" viewBox="0 0 34 40" fill="#fff" aria-hidden="true">
            <path d="M0 11L17 1v23z" /><path d="M1 17l17 12v10L4 30z" opacity=".7" /><path d="M18 29l15-15v17l-15 8z" opacity=".9" />
          </svg>
          HEXAGON
        </Brand>
      </Ribbon>

      <Work>
        <Palette>
          <PaletteGrid>
            {paletteIcons.map((n) => <button key={n} aria-label={n}><Icon name={n} /></button>)}
          </PaletteGrid>
        </Palette>

        <Viewport>
          <Part />
          <ViewTools>
            {viewIcons.map((n) => <ViewButton key={n} aria-label={n}><Icon name={n} /></ViewButton>)}
          </ViewTools>
          <Overlay>
            <ViewColumn>
              {shadeIcons.map((n) => <ViewButton key={n} $on={n === "cylWhite"} aria-label={n}><Icon name={n} /></ViewButton>)}
            </ViewColumn>
            <FileFacts>{facts.map((f) => <li key={f}>{f}</li>)}</FileFacts>
          </Overlay>
        </Viewport>

        <Navigator>
          <NavHeader>
            <NavTitle>CAM Navigator</NavTitle>
            <button aria-label="Pin navigator"><Icon name="pin" size={10} /></button>
            <button aria-label="Close navigator"><Icon name="close" size={10} /></button>
          </NavHeader>
          <NavBody>
            <NavTools>{navIcons.map((n) => <button key={n} aria-label={n}><Icon name={n} /></button>)}</NavTools>
            <NavMain>
              <NavTabs>
                <NavTab aria-label="Geometry"><Icon name="boxes" size={24} /></NavTab>
                <NavTab aria-label="Operations"><Icon name="gear" size={16} /></NavTab>
                <NavTab aria-label="Links" $active><Icon name="link" size={16} /></NavTab>
                <NavHistory>
                  <button aria-label="Undo"><Icon name="undoBlue" size={16} /></button>
                  <button aria-label="Redo"><Icon name="redo" size={14} /></button>
                </NavHistory>
              </NavTabs>
              <Tree>
                {tree.map((r) => (
                  <TreeRow key={r.text} $level={r.level}>
                    {r.mark ? <Expander aria-label="Toggle branch">{r.mark}</Expander> : <Branch />}
                    <Icon name={r.icon} size={14} />
                    <TreeLabel $kind={r.kind}>{r.text}</TreeLabel>
                  </TreeRow>
                ))}
              </Tree>
            </NavMain>
            <Scrollbar>
              <Icon name="chevUp" size={10} />
              <Thumb />
              <Icon name="chevDown" size={10} />
            </Scrollbar>
          </NavBody>
        </Navigator>

        <SideStrip>
          <SideTab>
            <SideIcon><Icon name="wheel" /></SideIcon>
            <SideText>CAM Navigator</SideText>
          </SideTab>
        </SideStrip>
      </Work>

      <Status>
        <StatusRow>
          <Grip />
          <Plain $w={100} $pad={88}><Icon name="lens" size={10} /></Plain>
          <Grip />
          <Plain $w={85} $pad={4}>Absolute XY Top</Plain>
          <Cell $w={53}>View ABS</Cell>
          <Grip />
          <Plain $w={49} $pad={4}><Strong>STRIP</Strong></Plain>
          <Cell $w={26} />
          <Cell $w={35} $pad={2}><Gauge /></Cell>
          <Cell $w={35} $pad={2}><Gauge /></Cell>
          <Cell $w={35} $pad={2}><Gauge /></Cell>
          <Cell $w={28}><Icon name="globe" size={12} /></Cell>
        </StatusRow>
        <StatusRow>
          <Cell $w={51}>Toggle</Cell>
          <StatusIcons>
            {statusIcons.map((n) => <StatusButton key={n} $on={n === "hammer"} aria-label={n}><Icon name={n} size={14} /></StatusButton>)}
          </StatusIcons>
          <Cell $w={96}>LS: 1.00 PS: 1.00</Cell>
          <Cell $w={66}>Units: INCH</Cell>
          <Cell $w={204} $pad={8}>X = 008.7225 <Negative>Y =-004.3638</Negative> Z = 000.0000</Cell>
        </StatusRow>
      </Status>
    </Screen>
  );
}
